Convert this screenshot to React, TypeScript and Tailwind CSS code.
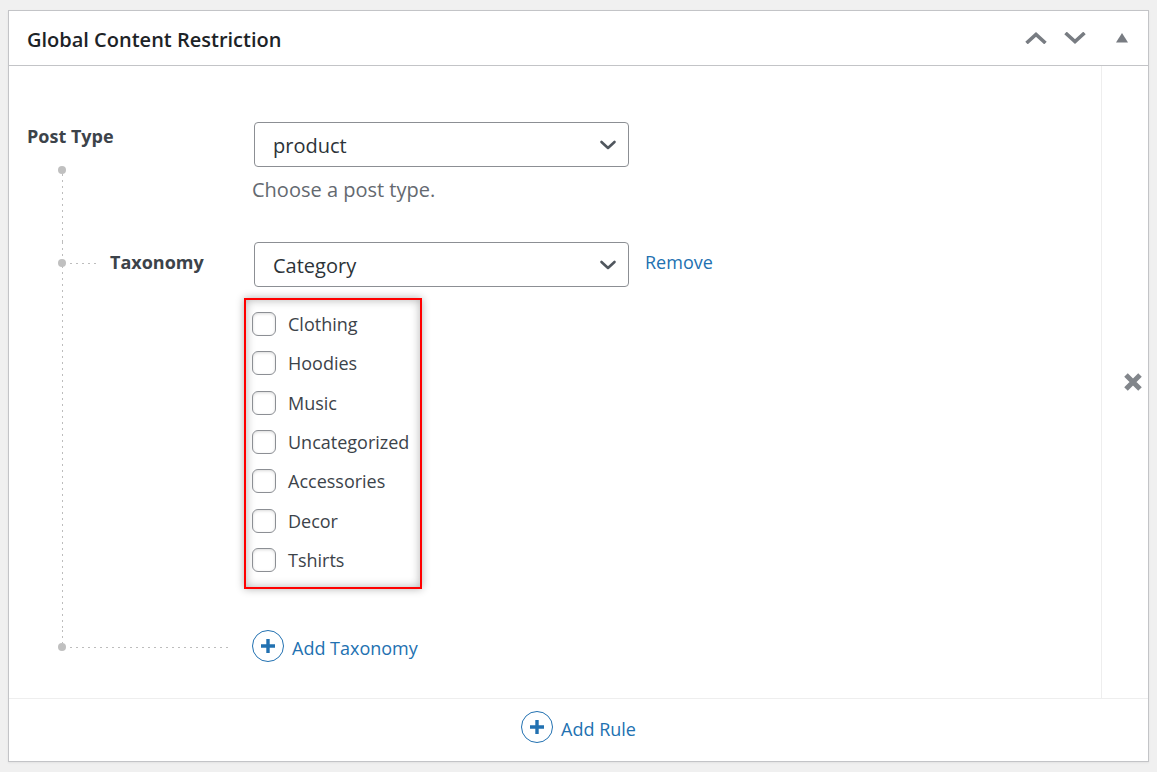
import React, { useState } from 'react';

const terms = ['Clothing', 'Hoodies', 'Music', 'Uncategorized', 'Accessories', 'Decor', 'Tshirts'];

const Chevron = ({ className }: { className?: string }) => (
  <svg width="22" height="12" viewBox="0 0 22 12" fill="none" stroke="currentColor" strokeWidth="3.6" className={className}>
    <path d="M1.5 11 11 2.5l9.5 8.5" />
  </svg>
);

const PlusCircle = () => (
  <span className="flex size-8 shrink-0 items-center justify-center rounded-full border border-[#2271b1]">
    <svg width="14" height="14" viewBox="0 0 14 14" stroke="currentColor" strokeWidth="3.4">
      <path d="M7 0v14M0 7h14" />
    </svg>
  </span>
);

const Dot = ({ className }: { className?: string }) => (
  <span className={`size-2 shrink-0 rounded-full bg-[#c0c0c0] ${className ?? ''}`} />
);

const verticalDots = 'w-px bg-[repeating-linear-gradient(to_bottom,#bdbdbd_0_2px,transparent_2px_6px)]';
const horizontalDots = 'h-px bg-[repeating-linear-gradient(to_right,#bdbdbd_0_2px,transparent_2px_6px)]';

type SelectFieldProps = {
  id: string;
  options: string[];
};

const SelectField = ({ id, options }: SelectFieldProps) => (
  <div className="relative w-[375px] max-w-full">
    <select
      id={id}
      className="h-[45px] w-full appearance-none rounded border border-[#8c8f94] bg-white pl-[18px] pr-12 pt-0.5 text-xl text-[#2c3338]"
    >
      {options.map((option) => (
        <option key={option}>{option}</option>
      ))}
    </select>
    <svg
      width="18"
      height="12"
      viewBox="0 0 18 12"
      fill="none"
      stroke="#50575e"
      strokeWidth="2.6"
      strokeLinecap="round"
      strokeLinejoin="round"
      className="pointer-events-none absolute right-3 top-[17px]"
    >
      <path d="M2.5 3 9 9l6.5-6" />
    </svg>
  </div>
);

const TermList = () => {
  const [checked, setChecked] = useState<string[]>([]);

  const toggle = (term: string) => {
    setChecked(checked.includes(term) ? checked.filter((item) => item !== term) : [...checked, term]);
  };

  return (
    <div className="-ml-2.5 mt-[11px] w-[178px] border-2 border-[#f00] pb-[15px] pl-1.5 pt-3 shadow-[0_0_8px_rgba(0,0,0,0.3),inset_0_0_10px_rgba(0,0,0,0.3)]">
      <ul className="flex h-[260px] flex-col justify-between">
        {terms.map((term) => (
          <li key={term}>
            <label className="flex h-6 items-center gap-3 text-lg text-[#3c434a]">
              <input
                type="checkbox"
                checked={checked.includes(term)}
                onChange={() => toggle(term)}
                className="size-6 shrink-0 appearance-none rounded-md border border-[#8c8f94] bg-white shadow-[inset_0_1px_3px_rgba(0,0,0,0.15)] checked:bg-[#2271b1]"
              />
              {term}
            </label>
          </li>
        ))}
      </ul>
    </div>
  );
};

const App = () => {
  return (
    <div className="min-h-screen bg-[#f0f0f0] px-2 py-2.5 font-['Open_Sans',sans-serif] text-[#3c434a]">
      <section className="border border-[#c3c4c7] bg-white shadow-[0_1px_2px_rgba(0,0,0,0.06)]">
        <header className="flex h-[55px] items-center justify-between border-b border-[#c3c4c7] pl-[18px] pr-5">
          <h2 className="pt-1 text-xl font-semibold text-[#1d2327]">Global Content Restriction</h2>
          <div className="flex items-center text-[#787c82]">
            <button type="button" aria-label="Move up" className="mr-[17px]">
              <Chevron />
            </button>
            <button type="button" aria-label="Move down" className="mr-[30px]">
              <Chevron className="rotate-180" />
            </button>
            <button type="button" aria-label="Toggle panel">
              <svg width="12" height="10" viewBox="0 0 12 10" fill="currentColor">
                <path d="M6 0l6 9.5H0z" />
              </svg>
            </button>
          </div>
        </header>

        <div className="flex border-b border-[#eee]">
          <div className="grow pb-9 pl-[18px] pt-14">
            <div className="flex h-[120px]">
              <div className="flex w-[225px] shrink-0 flex-col">
                <label htmlFor="post-type" className="text-lg font-bold">
                  Post Type
                </label>
                <div className="ml-[31px] mt-4 flex w-2 grow flex-col items-center">
                  <Dot />
                  <span className={`grow ${verticalDots}`} />
                </div>
              </div>
              <div>
                <div className="pl-0.5">
                  <SelectField id="post-type" options={['product', 'post', 'page']} />
                </div>
                <p className="mt-[9px] text-xl text-[#646970]">Choose a post type.</p>
              </div>
            </div>

            <div className="flex">
              <div className="flex w-[227px] shrink-0">
                <div className="relative ml-[31px] flex w-2 justify-center">
                  <span className={verticalDots} />
                  <Dot className="absolute left-0 top-[17px]" />
                </div>
                <span className={`ml-1 mt-[21px] w-[26px] ${horizontalDots}`} />
                <label htmlFor="taxonomy" className="ml-3.5 mt-1.5 text-lg font-bold">
                  Taxonomy
                </label>
              </div>
              <div className="pb-[41px]">
                <div className="flex gap-4">
                  <SelectField id="taxonomy" options={['Category', 'Tag']} />
                  <a href="#remove" className="mt-1.5 text-lg text-[#2271b1]">
                    Remove
                  </a>
                </div>
                <TermList />
              </div>
            </div>

            <div className="flex">
              <div className="flex w-[225px] shrink-0">
                <div className="ml-[31px] flex w-2 flex-col items-center">
                  <span className={`h-[13px] ${verticalDots}`} />
                  <Dot />
                </div>
                <span className={`ml-1 mr-[22px] mt-[17px] grow ${horizontalDots}`} />
              </div>
              <button type="button" className="flex items-center gap-2 text-lg text-[#2271b1]">
                <PlusCircle />
                <span className="pt-[3px]">Add Taxonomy</span>
              </button>
            </div>
          </div>

          <div className="flex w-[47px] shrink-0 items-center justify-end border-l border-[#eee] pr-1.5">
            <button type="button" aria-label="Delete rule" className="text-[#82868b]">
              <svg width="18" height="18" viewBox="0 0 18 18" stroke="currentColor" strokeWidth="5">
                <path d="M2 2l14 14M16 2L2 16" />
              </svg>
            </button>
          </div>
        </div>

        <footer className="flex justify-center pb-[18px] pt-3">
          <button type="button" className="flex items-center gap-2 text-lg text-[#2271b1]">
            <PlusCircle />
            <span className="pt-[3px]">Add Rule</span>
          </button>
        </footer>
      </section>
    </div>
  );
};

export default App;
